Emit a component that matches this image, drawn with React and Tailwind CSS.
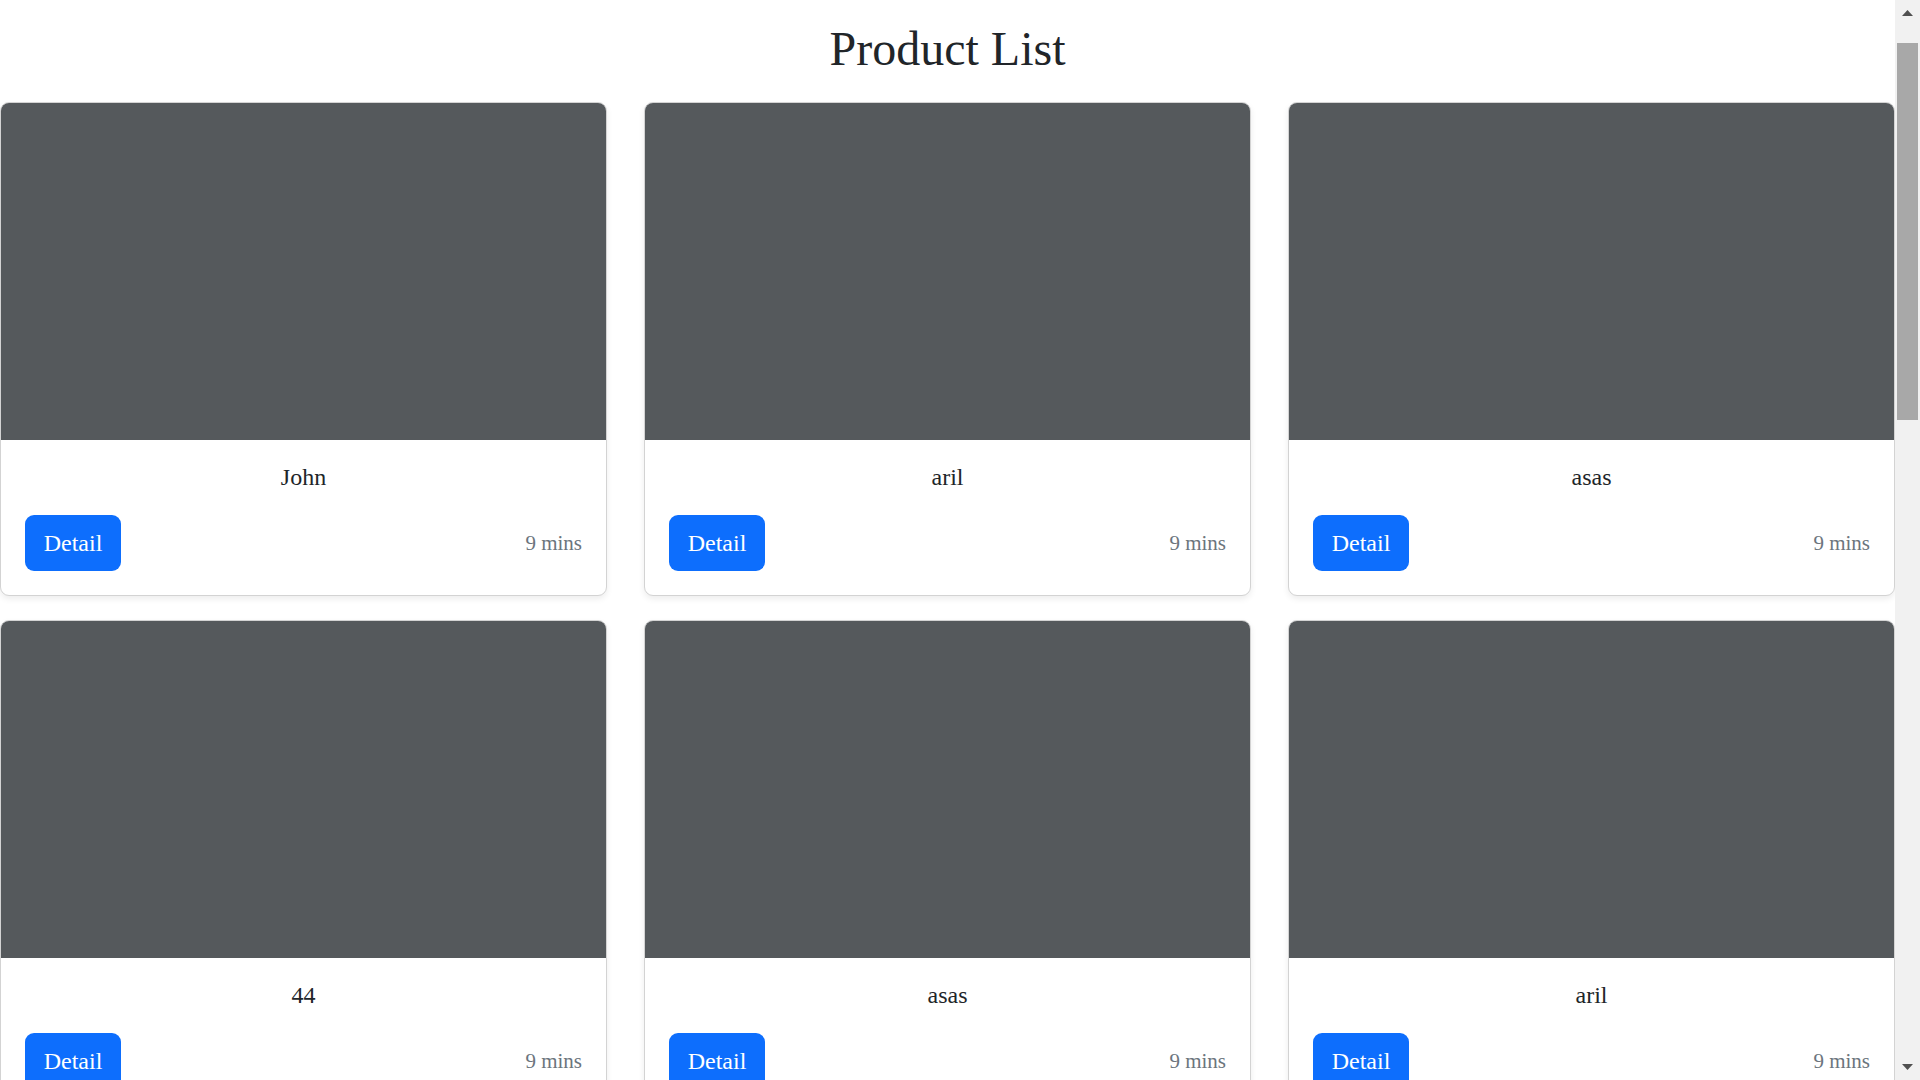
import React from "react";

const items = ["John", "aril", "asas", "44", "asas", "aril"];

function Card({ name }) {
  return (
    <div className="flex flex-col rounded-[9px] border border-[#d3d3d3] bg-white shadow-[0_3px_6px_rgba(0,0,0,0.075)] overflow-hidden">
      <div className="h-[337px] bg-[#55595c]" />
      <div className="flex flex-col px-[24px] pt-[19px] pb-[24px]">
        <p className="text-center text-[24px] leading-[36px] text-[#212529]">{name}</p>
        <div className="mt-[20px] flex items-center justify-between">
          <button className="flex h-[56px] w-[96px] items-center justify-center rounded-[9px] bg-[#0d6efd] text-[24px] leading-[36px] text-white">
            Detail
          </button>
          <span className="text-[21px] leading-[30px] text-[#6c757d]">9 mins</span>
        </div>
      </div>
    </div>
  );
}

export default function App() {
  return (
    <div
      className="flex h-screen w-full overflow-hidden bg-white"
      style={{ fontFamily: '"Liberation Serif", "Times New Roman", serif' }}
    >
      <main className="flex-1 overflow-hidden">
        <h1 className="pt-[20px] text-center text-[48px] font-normal leading-[58px] text-[#212529]">
          Product List
        </h1>
        <div className="mt-[24px] grid grid-cols-3 gap-x-[37px] gap-y-[24px]">
          {items.map((n, i) => (
            <Card key={i} name={n} />
          ))}
        </div>
      </main>
      <aside className="flex w-[25px] flex-col items-center bg-[#f1f1f1]">
        <div className="flex h-[26px] w-full items-center justify-center">
          <svg width="11" height="6" viewBox="0 0 11 6">
            <polygon points="5.5,0 11,6 0,6" fill="#505050" />
          </svg>
        </div>
        <div className="mt-[17px] h-[377px] w-[21px] bg-[#a8a8a8]" />
        <div className="flex-1" />
        <div className="flex h-[26px] w-full items-center justify-center">
          <svg width="11" height="6" viewBox="0 0 11 6">
            <polygon points="0,0 11,0 5.5,6" fill="#505050" />
          </svg>
        </div>
      </aside>
    </div>
  );
}
